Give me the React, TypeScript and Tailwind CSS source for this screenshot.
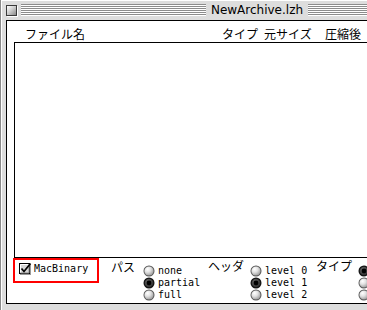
import React from "react";

const jp = { fontFamily: '"Noto Sans CJK JP", sans-serif' };
const mono = { fontFamily: '"DejaVu Sans Mono", monospace' };

function Radio({ on }: { on?: boolean }) {
  return (
    <svg width="12" height="12" viewBox="0 0 12 12" className="shrink-0">
      <defs>
        <radialGradient id="rg" cx="0.35" cy="0.3" r="0.75">
          <stop offset="0" stopColor="#ffffff" />
          <stop offset="0.45" stopColor="#e2e2e2" />
          <stop offset="1" stopColor="#9a9a9a" />
        </radialGradient>
        <radialGradient id="rgon" cx="0.4" cy="0.35" r="0.7">
          <stop offset="0" stopColor="#6a6a6a" />
          <stop offset="1" stopColor="#2a2a2a" />
        </radialGradient>
      </defs>
      {on ? (
        <>
          <circle cx="6" cy="6" r="5.5" fill="#111" />
          <circle cx="6" cy="6" r="4.3" fill="url(#rgon)" />
          <circle cx="6" cy="6" r="2.4" fill="#000" />
        </>
      ) : (
        <>
          <circle cx="6" cy="6" r="5.5" fill="#555" />
          <circle cx="6" cy="6" r="4.6" fill="url(#rg)" />
        </>
      )}
    </svg>
  );
}

function RadioGroup({ items, sel, w }: { items: string[]; sel: number; w: string }) {
  return (
    <div className={`flex flex-col mt-[7px] ${w}`}>
      {items.map((t, i) => (
        <div key={i} className="h-[12px] flex items-center">
          <Radio on={i === sel} />
          <span className="ml-[3px] text-[10px] leading-[12px] text-black whitespace-pre" style={mono}>
            {t}
          </span>
        </div>
      ))}
    </div>
  );
}

function Stripes({ className }: { className: string }) {
  return (
    <div
      className={`h-[12px] bg-[repeating-linear-gradient(to_bottom,#8c8c8c_0px,#8c8c8c_1px,#ffffff_1px,#ffffff_2px)] ${className}`}
    />
  );
}

export default function App() {
  return (
    <div className="w-[367px] h-[310px] overflow-hidden bg-[#dddddd]">
      <div className="w-[515px] h-[310px] flex flex-col bg-[#dddddd] border-l border-[#8a8a8a] shadow-[inset_1px_1px_0_#ffffff]">
        {/* title bar */}
        <div className="h-[20px] flex items-center shrink-0">
          <div className="ml-[5px] w-[11px] h-[11px] border border-[#3a3a3a] bg-[linear-gradient(135deg,#ffffff_0%,#d0d0d0_45%,#8a8a8a_100%)] shadow-[1px_1px_0_#ffffff]" />
          <Stripes className="ml-[4px] w-[185px]" />
          <div
            className="w-[102px] text-center text-[12px] leading-[14px] text-black"
            style={{ fontFamily: '"DejaVu Sans", sans-serif' }}
          >
            NewArchive.lzh
          </div>
          <Stripes className="flex-1 mr-[22px]" />
        </div>
        {/* frame */}
        <div className="flex-1 flex pl-[5px] pr-[6px] pb-[6px]">
          <div className="flex-1 flex flex-col bg-white border border-black">
            {/* header */}
            <div
              className="mt-[6px] h-[14px] flex text-[12px] leading-[14px] text-black whitespace-nowrap"
              style={jp}
            >
              <div className="pl-[18px] w-[215px]">ファイル名</div>
              <div className="w-[42px]">タイプ</div>
              <div className="w-[61px]">元サイズ</div>
              <div className="w-[60px]">圧縮後</div>
            </div>
            {/* list box */}
            <div className="ml-[7px] mr-[7px] mt-[1px] h-[216px] border border-black bg-white" />
            {/* bottom controls */}
            <div className="flex items-start">
              <div className="ml-[6px] w-[86px] h-[25px] border-2 border-[#ff0000] flex items-start pl-[4px] pt-[3px]">
                <svg width="13" height="12" viewBox="0 0 13 12" className="shrink-0">
                  <rect x="0.5" y="0.5" width="10" height="10" fill="#d6d6d6" stroke="#000" />
                  <path d="M1.5 9.5 V1.5 H9.5" stroke="#ffffff" fill="none" />
                  <path d="M10 1.5 V10 H1.5" stroke="#8a8a8a" fill="none" />
                  <rect x="11" y="1" width="1" height="11" fill="#9a9a9a" />
                  <rect x="1" y="11" width="11" height="1" fill="#9a9a9a" />
                  <path d="M2.5 5.5 L5 8.5 L11.5 0.5" stroke="#000" strokeWidth="1.7" fill="none" />
                </svg>
                <span className="ml-[2px] text-[10px] leading-[12px] text-black" style={mono}>
                  MacBinary
                </span>
              </div>
              <div className="ml-[12px] mt-[2px] text-[12px] leading-[13px] text-black" style={jp}>
                パス
              </div>
              <div className="ml-[8px]">
                <RadioGroup items={["none", "partial", "full"]} sel={1} w="w-[65px]" />
              </div>
              <div className="mt-[1px] w-[36px] text-[12px] leading-[13px] text-black" style={jp}>
                ヘッダ
              </div>
              <div className="ml-[6px]">
                <RadioGroup items={["level 0", "level 1", "level 2"]} sel={1} w="w-[66px]" />
              </div>
              <div className="mt-[1px] w-[36px] text-[12px] leading-[13px] text-black" style={jp}>
                タイプ
              </div>
              <div className="ml-[6px]">
                <RadioGroup items={["", "", ""]} sel={0} w="w-[60px]" />
              </div>
            </div>
          </div>
        </div>
      </div>
    </div>
  );
}
